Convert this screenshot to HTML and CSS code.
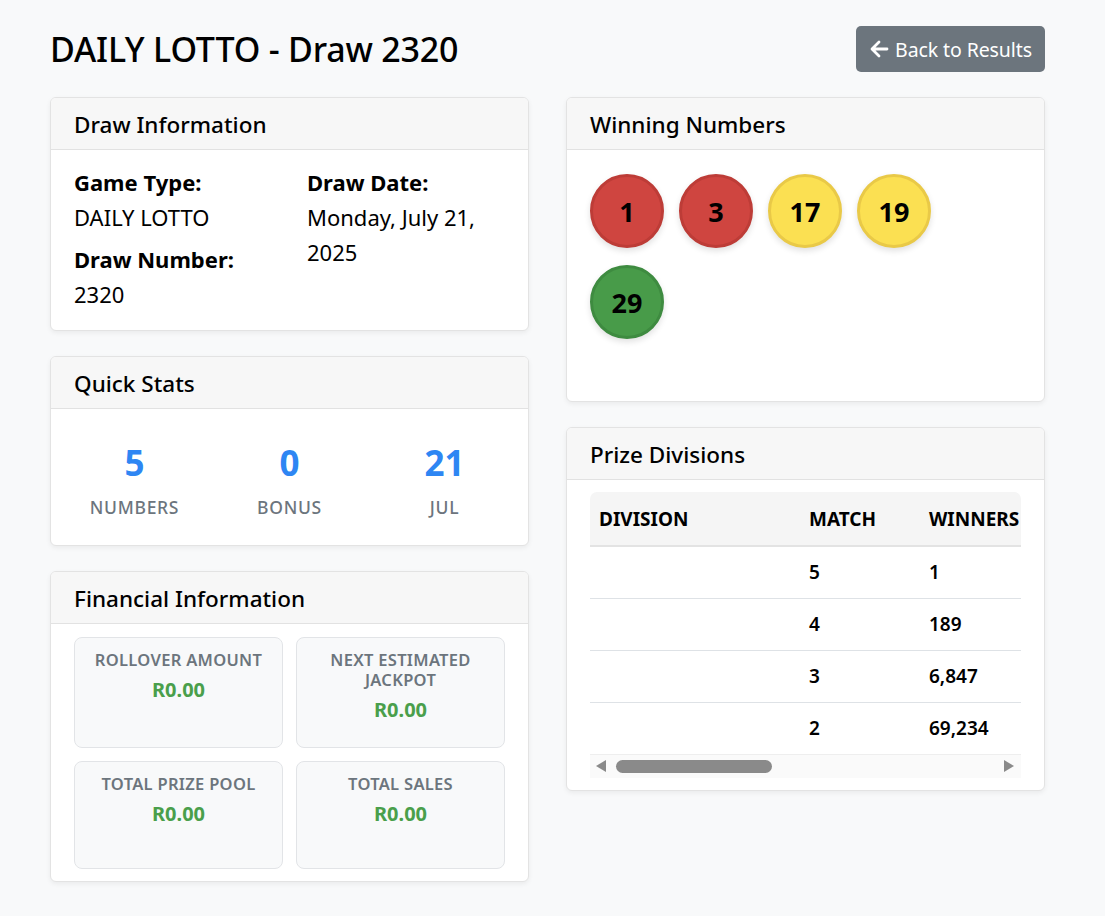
FILE: index.html
```html
<!DOCTYPE html>
<html lang="en">
<head>
<meta charset="utf-8">
<title>DAILY LOTTO - Draw 2320</title>
<link rel="stylesheet" href="styles.css">
</head>
<body>
<div class="page">
  <header class="top">
    <h1 class="title">DAILY LOTTO - Draw 2320</h1>
    <a class="btn-back" href="#">
      <svg class="arrow" viewBox="0 0 20 20" width="20" height="20" aria-hidden="true"><path d="M18 10H3.5M10 3l-7 7 7 7" fill="none" stroke="#fff" stroke-width="2.8" stroke-linecap="round" stroke-linejoin="round"/></svg>
      <span>Back to Results</span>
    </a>
  </header>

  <div class="columns">
    <div class="col">
      <section class="card">
        <div class="card-header">Draw Information</div>
        <div class="card-body info-body">
          <div class="info-col">
            <div class="info-item">
              <div class="info-label">Game Type:</div>
              <div class="info-value">DAILY LOTTO</div>
            </div>
            <div class="info-item">
              <div class="info-label">Draw Number:</div>
              <div class="info-value">2320</div>
            </div>
          </div>
          <div class="info-col">
            <div class="info-item">
              <div class="info-label">Draw Date:</div>
              <div class="info-value">Monday, July 21, 2025</div>
            </div>
          </div>
        </div>
      </section>

      <section class="card">
        <div class="card-header">Quick Stats</div>
        <div class="card-body stats-body">
          <div class="stat">
            <div class="stat-num">5</div>
            <div class="stat-label">Numbers</div>
          </div>
          <div class="stat">
            <div class="stat-num">0</div>
            <div class="stat-label">Bonus</div>
          </div>
          <div class="stat">
            <div class="stat-num">21</div>
            <div class="stat-label">Jul</div>
          </div>
        </div>
      </section>

      <section class="card">
        <div class="card-header">Financial Information</div>
        <div class="card-body fin-body">
          <div class="fin-box">
            <div class="fin-label">Rollover Amount</div>
            <div class="fin-value">R0.00</div>
          </div>
          <div class="fin-box">
            <div class="fin-label">Next Estimated Jackpot</div>
            <div class="fin-value">R0.00</div>
          </div>
          <div class="fin-box">
            <div class="fin-label">Total Prize Pool</div>
            <div class="fin-value">R0.00</div>
          </div>
          <div class="fin-box">
            <div class="fin-label">Total Sales</div>
            <div class="fin-value">R0.00</div>
          </div>
        </div>
      </section>
    </div>

    <div class="col">
      <section class="card">
        <div class="card-header">Winning Numbers</div>
        <div class="card-body balls-body">
          <div class="balls">
            <span class="ball ball-red">1</span>
            <span class="ball ball-red">3</span>
            <span class="ball ball-yellow">17</span>
            <span class="ball ball-yellow">19</span>
            <span class="ball ball-green">29</span>
          </div>
        </div>
      </section>

      <section class="card">
        <div class="card-header">Prize Divisions</div>
        <div class="card-body prize-body">
          <div class="table-wrap">
            <div class="table-clip">
              <table class="prize-table">
                <thead>
                  <tr><th class="c-div">Division</th><th class="c-match">Match</th><th class="c-win">Winners</th></tr>
                </thead>
                <tbody>
                  <tr><td></td><td>5</td><td>1</td></tr>
                  <tr><td></td><td>4</td><td>189</td></tr>
                  <tr><td></td><td>3</td><td>6,847</td></tr>
                  <tr><td></td><td>2</td><td>69,234</td></tr>
                </tbody>
              </table>
            </div>
            <div class="hscroll" aria-hidden="true">
              <span class="tri tri-left"></span>
              <span class="track"><span class="thumb"></span></span>
              <span class="tri tri-right"></span>
            </div>
          </div>
        </div>
      </section>
    </div>
  </div>
</div>
</body>
</html>
```
FILE: styles.css
```css
* { box-sizing: border-box; }

html, body {
  margin: 0;
  padding: 0;
}

body {
  background: #f8f9fa;
  color: #000;
  font-family: "Noto Sans", "Open Sans", "DejaVu Sans", sans-serif;
  font-size: 22px;
}

.page {
  width: 995px;
  margin-left: 50px;
  padding-top: 26px;
  padding-bottom: 30px;
}

.top {
  display: flex;
  justify-content: space-between;
  align-items: center;
  height: 46px;
  margin-bottom: 25px;
}

.title {
  margin: 0;
  font-size: 34px;
  font-weight: 500;
  line-height: 46px;
  letter-spacing: -0.2px;
}

.btn-back {
  display: flex;
  align-items: center;
  justify-content: center;
  gap: 6px;
  width: 189px;
  height: 46px;
  padding: 0 8px;
  background: #6c757d;
  color: #fff;
  border-radius: 5px;
  text-decoration: none;
  font-size: 19.5px;
  white-space: nowrap;
  letter-spacing: -0.1px;
}

.arrow { flex: none; }

.columns {
  display: grid;
  grid-template-columns: 479px 479px;
  column-gap: 37px;
  align-items: start;
}

.col {
  display: flex;
  flex-direction: column;
  gap: 25px;
}

.card {
  background: #fff;
  border: 1px solid #e3e3e3;
  border-radius: 6px;
  box-shadow: 0 2px 5px rgba(0, 0, 0, 0.06);
  overflow: hidden;
}

.card-header {
  background: #f7f7f7;
  border-bottom: 1px solid #e2e2e2;
  padding: 1px 23px 0;
  height: 52px;
  display: flex;
  align-items: center;
  font-size: 22.5px;
  font-weight: 500;
}

/* Draw information */
.info-body {
  display: grid;
  grid-template-columns: 233px 1fr;
  padding: 17px 23px 18px;
}

.info-item + .info-item { margin-top: 9px; }

.info-label {
  font-weight: 700;
  line-height: 30px;
  margin-bottom: 3px;
}

.info-value {
  line-height: 35px;
}

/* Quick stats */
.stats-body {
  display: grid;
  grid-template-columns: repeat(3, 155px);
  justify-content: center;
  padding: 31px 0 26px;
  text-align: center;
}

.stat-num {
  color: #2e86f3;
  font-size: 35px;
  font-weight: 700;
  line-height: 46px;
}

.stat-label {
  margin-top: 9px;
  color: #6c757d;
  font-size: 17.5px;
  font-weight: 500;
  letter-spacing: 0.7px;
  text-transform: uppercase;
  line-height: 24px;
}

/* Financial */
.fin-body {
  display: grid;
  grid-template-columns: 1fr 1fr;
  gap: 13px;
  padding: 13px 23px 12px;
}

.fin-box {
  min-height: 108px;
  background: #f8f9fa;
  border: 1px solid #e2e4e7;
  border-radius: 8px;
  padding: 12px 14px;
  text-align: center;
}

.fin-label {
  color: #6c757d;
  font-size: 16.5px;
  font-weight: 600;
  line-height: 20px;
  letter-spacing: 0.3px;
  text-transform: uppercase;
  margin-bottom: 6px;
}

.fin-value {
  color: #4a9f4b;
  font-size: 20px;
  font-weight: 700;
  line-height: 28px;
  margin-bottom: 11px;
}

/* Winning numbers */
.balls-body {
  padding: 24px 23px 45px;
}

.balls {
  display: flex;
  flex-wrap: wrap;
}

.ball {
  width: 74px;
  height: 74px;
  margin: 0 15px 17px 0;
  border-radius: 50%;
  display: flex;
  align-items: center;
  justify-content: center;
  font-size: 27px;
  font-weight: 700;
  color: #000;
  border: 3px solid transparent;
  box-shadow: 0 3px 6px rgba(0, 0, 0, 0.12);
}

.ball-red { background: #cf4540; border-color: #bd3c37; }
.ball-yellow { background: #fbe052; border-color: #e9c947; }
.ball-green { background: #489b49; border-color: #3e8b40; }

/* Prize divisions */
.prize-body {
  padding: 12px 23px 12px;
}

.table-wrap {
  border-radius: 7px 7px 0 0;
  overflow: hidden;
}

.table-clip {
  overflow: hidden;
}

.prize-table {
  border-collapse: collapse;
  table-layout: fixed;
  width: 520px;
  font-size: 19px;
  font-weight: 600;
}

.prize-table th,
.prize-table td {
  text-align: left;
  padding: 0 9px;
  white-space: nowrap;
}

.prize-table th {
  height: 54px;
  background: #f5f5f5;
  text-transform: uppercase;
  font-weight: 700;
  border-bottom: 2px solid #e3e3e3;
}

.prize-table td {
  height: 52px;
  border-bottom: 1px solid #dee2e6;
}

.prize-table tbody tr:last-child td { border-bottom: 1px solid #eeeeee; }

.c-div { width: 210px; }
.c-match { width: 120px; }
.c-win { width: 190px; }

.hscroll {
  display: flex;
  align-items: center;
  height: 23px;
  background: #fafafa;
  padding: 0 7px 0 6px;
}

.tri {
  width: 0;
  height: 0;
  border-top: 6px solid transparent;
  border-bottom: 6px solid transparent;
}

.tri-left { border-right: 10px solid #8a8a8a; }
.tri-right { border-left: 10px solid #8a8a8a; }

.track {
  flex: 1;
  display: flex;
  padding: 0 10px;
}

.thumb {
  width: 156px;
  height: 13px;
  background: #8a8a8a;
  border-radius: 7px;
}
```
